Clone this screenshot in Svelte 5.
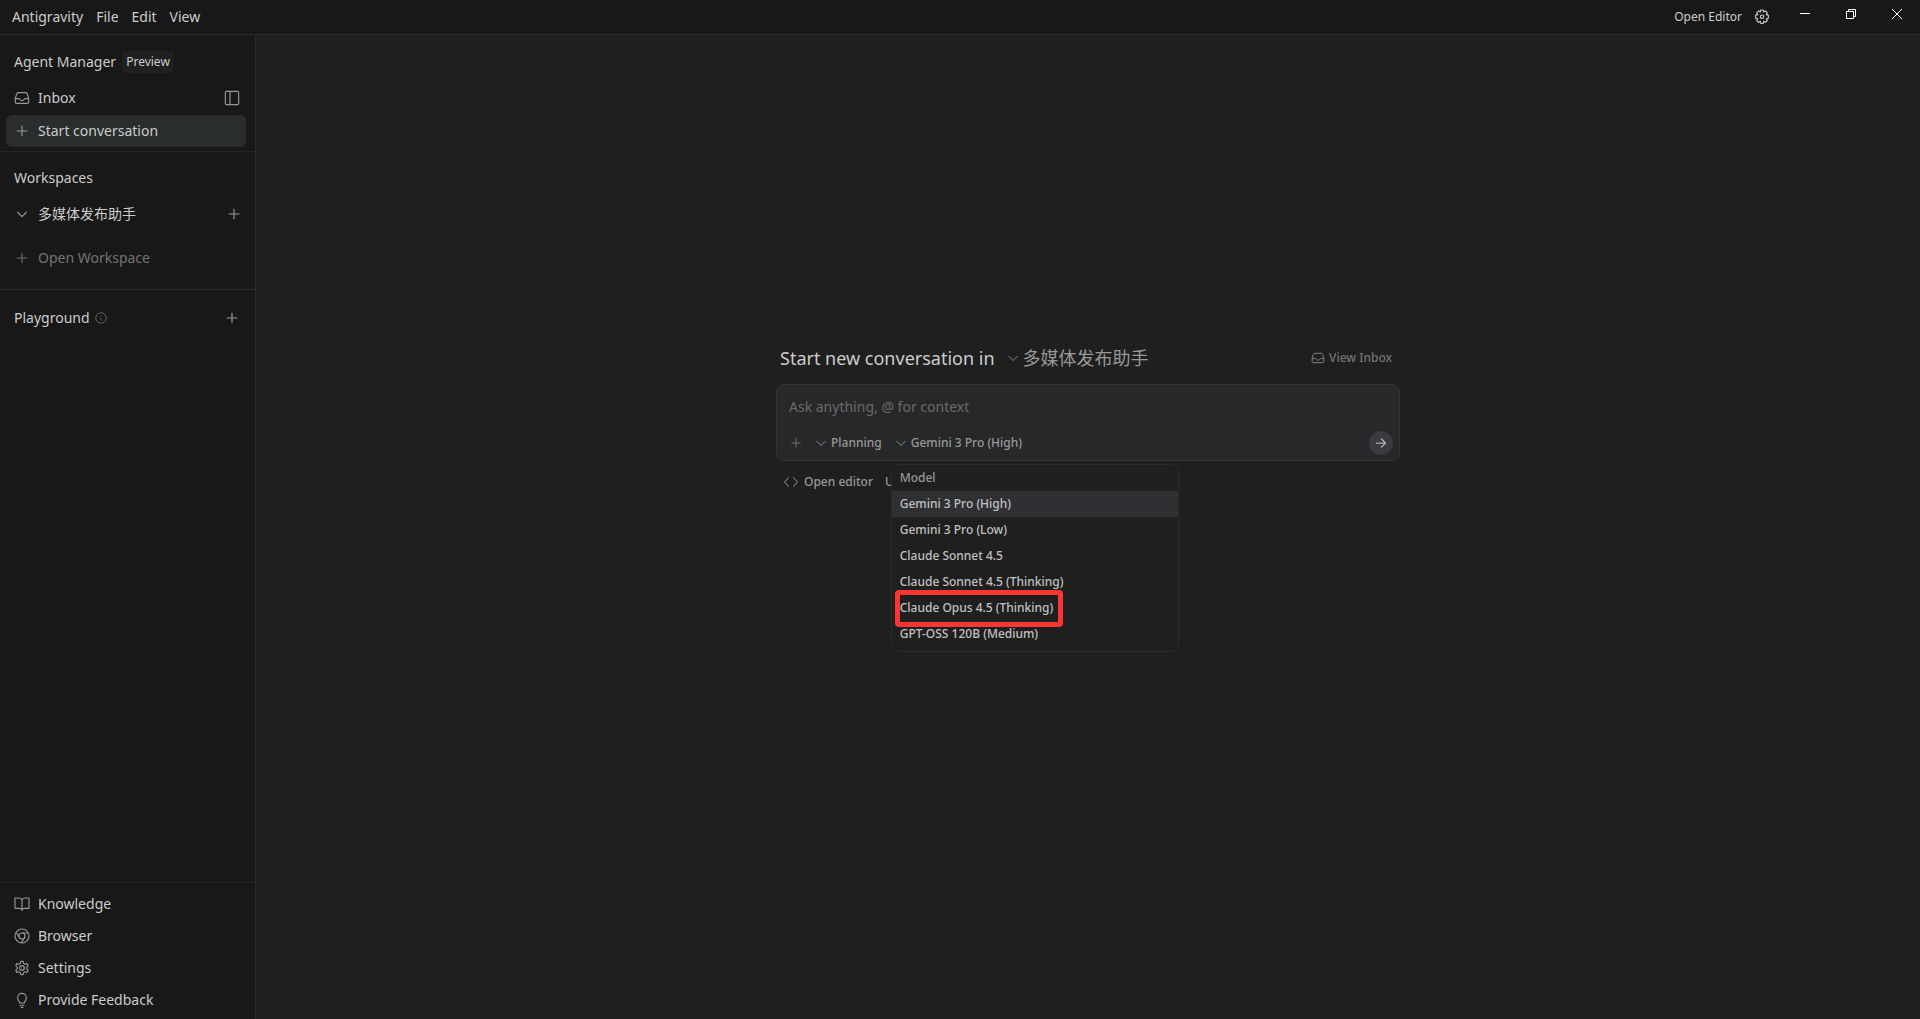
<script>
  const menus = ['File', 'Edit', 'View'];
  const models = [
    'Gemini 3 Pro (High)',
    'Gemini 3 Pro (Low)',
    'Claude Sonnet 4.5',
    'Claude Sonnet 4.5 (Thinking)',
    'Claude Opus 4.5 (Thinking)',
    'GPT-OSS 120B (Medium)'
  ];
  const marked = 'Claude Opus 4.5 (Thinking)';
  const footer = [
    { label: 'Knowledge', icon: 'book' },
    { label: 'Browser', icon: 'chrome' },
    { label: 'Settings', icon: 'gear' },
    { label: 'Provide Feedback', icon: 'bulb' }
  ];
  const workspace = '多媒体发布助手';
  let selected = $state(models[0]);
  let open = $state(true);
  let prompt = $state('');

  function choose(model) {
    selected = model;
    open = false;
  }
</script>

{#snippet icon(name, size = 16)}
  <svg class="icon" width={size} height={size} viewBox="0 0 24 24" aria-hidden="true">
    {#if name === 'inbox'}
      <path d="M22 13h-5.500c-.8 0-1 .5-1.500 1.200C14.300 15.400 13.400 16 12 16s-2.300-.6-3-1.800C8.500 13.500 8.300 13 7.500 13H2" />
      <path d="M6.500 4h11c1 0 1.700.5 2.100 1.400L22 12v6c0 1.200-.8 2-2 2H4c-1.200 0-2-.8-2-2v-6l2.400-6.600C4.800 4.500 5.500 4 6.500 4z" />
    {:else if name === 'panel'}
      <rect x="2" y="2" width="20" height="20" rx="2" />
      <path d="M9 2v20" />
    {:else if name === 'plus'}
      <path d="M12 4v16M4 12h16" />
    {:else if name === 'chevron'}
      <path d="M5 9l7 7 7-7" />
    {:else if name === 'chevron-wide'}
      <path d="M3 8l9 9 9-9" />
    {:else if name === 'info'}
      <circle cx="12" cy="12" r="10.500" />
      <path d="M12 11v6M12 7v2" />
    {:else if name === 'book'}
      <path d="M12 5.500C11 4 9.500 3 7.500 3H1.500v15.500H8c2 0 3.200.8 4 2.200.8-1.400 2-2.200 4-2.200h6.500V3h-6c-2 0-3.500 1-4.500 2.500zM12 5.500v17" />
    {:else if name === 'chrome'}
      <circle cx="12" cy="12" r="10.500" />
      <circle cx="12" cy="12" r="4.500" />
      <path d="M12 7.500h9.300M8.100 14.300L3.200 6.300M15.900 14.300l-5 8" />
    {:else if name === 'gear'}
      <path d="M10.300 2h3.400l.7 3 2.200 1.300 3-.9 1.700 3L19.100 10.600v2.800l2.200 2.200-1.700 3-3-.9-2.200 1.300-.7 3h-3.400l-.7-3-2.200-1.300-3 .9-1.700-3 2.200-2.200v-2.800L2.700 8.400l1.700-3 3 .9L9.600 5z" />
      <circle cx="12" cy="12" r="3.500" />
    {:else if name === 'bulb'}
      <path d="M8.500 16.500c0-2-3-3.500-3-8a6.500 6.500 0 0 1 13 0c0 4.500-3 6-3 8zM8.500 19.800h7M10 23h4" />
    {:else if name === 'cog'}
      <path d="M10.200 1.500h3.600l.7 3 2.700-1.700 2.900 2.900-1.800 2.700 3.200.8v4.600l-3.200.8 1.800 2.700-2.900 2.900-2.700-1.700-.7 3.200h-3.600l-.7-3.200-2.700 1.700-2.900-2.900 1.800-2.700-3.200-.8V9.200l3.200-.8-1.800-2.700 2.900-2.900 2.700 1.700z" />
      <circle cx="12" cy="11.500" r="2.500" />
    {:else if name === 'arrow'}
      <path d="M2 12h19M12 3l9 9-9 9" />
    {:else if name === 'code'}
      <path d="M8 4l-7 8 7 8M16 4l7 8-7 8" />
    {/if}
  </svg>
{/snippet}

<div class="app">
  <header>
    <nav aria-label="Application menu">
      <span>Antigravity</span>
      {#each menus as menu}
        <button>{menu}</button>
      {/each}
    </nav>
    <div class="tools">
      <button class="open-editor">Open Editor</button>
      <button class="cog" aria-label="Settings">{@render icon('cog')}</button>
      <div class="window">
        <button aria-label="Minimize">
          <svg width="10" height="10" viewBox="0 0 10 10"><path d="M0 4.500h10" /></svg>
        </button>
        <button aria-label="Restore">
          <svg width="10" height="10" viewBox="0 0 10 10"><path d="M.5 2.500h7v7h-7zM2.500 2V.5h7v7H8" /></svg>
        </button>
        <button aria-label="Close">
          <svg width="10" height="10" viewBox="0 0 10 10"><path d="M0 0l10 10M10 0L0 10" /></svg>
        </button>
      </div>
    </div>
  </header>

  <div class="body">
    <aside>
      <section class="top">
        <div class="title">Agent Manager <span class="badge">Preview</span></div>
        <div class="row">
          <button class="item">{@render icon('inbox')}Inbox</button>
          <button class="action" aria-label="Toggle sidebar">{@render icon('panel')}</button>
        </div>
        <button class="item start">{@render icon('plus')}Start conversation</button>
      </section>
      <section class="workspaces">
        <h2>Workspaces</h2>
        <div class="row">
          <button class="item">{@render icon('chevron')}{workspace}</button>
          <button class="action" aria-label="New conversation in workspace">{@render icon('plus')}</button>
        </div>
        <button class="item muted">{@render icon('plus')}Open Workspace</button>
      </section>
      <section class="playground">
        <h2>Playground {@render icon('info', 12)}</h2>
        <button class="action" aria-label="New playground">{@render icon('plus')}</button>
      </section>
      <nav class="footer" aria-label="Resources">
        {#each footer as entry}
          <button class="item">{@render icon(entry.icon)}{entry.label}</button>
        {/each}
      </nav>
    </aside>

    <main>
      <div class="column">
        <div class="heading">
          <h1>Start new conversation in</h1>
          <button class="where">{@render icon('chevron-wide', 12)}<span>{workspace}</span></button>
          <button class="view-inbox">{@render icon('inbox', 14)}View Inbox</button>
        </div>
        <form class="composer" onsubmit={(e) => e.preventDefault()}>
          <input type="text" aria-label="Message" placeholder="Ask anything, @ for context" bind:value={prompt} />
          <div class="controls">
            <button type="button" class="add" aria-label="Add context">{@render icon('plus', 14)}</button>
            <button type="button" class="pick">{@render icon('chevron-wide', 12)}Planning</button>
            <div class="model">
              <button type="button" class="pick" aria-expanded={open} onclick={() => (open = !open)}>
                {@render icon('chevron-wide', 12)}{selected}
              </button>
              {#if open}
                <div class="popup">
                  <div class="caption">Model</div>
                  {#each models as model}
                    <button type="button" class:active={model === selected} onclick={() => choose(model)}>
                      <span class:marked={model === marked}>{model}</span>
                    </button>
                  {/each}
                </div>
              {/if}
            </div>
            <button class="send" aria-label="Send">{@render icon('arrow', 12)}</button>
          </div>
        </form>
        <div class="links">
          <button>{@render icon('code', 14)}Open editor</button>
          <button>U</button>
        </div>
      </div>
    </main>
  </div>
</div>

<style>
  :global(body) {
    background: #1f1f1f;
  }
  .app {
    min-height: 100vh;
    display: flex;
    flex-direction: column;
    box-sizing: border-box;
    color: #cccccc;
    font: 14px/20px 'Noto Sans', 'Noto Sans CJK SC', sans-serif;
  }
  .app * {
    box-sizing: border-box;
  }
  button {
    display: flex;
    align-items: center;
    border: 0;
    padding: 0;
    background: none;
    color: inherit;
    font: inherit;
    white-space: nowrap;
  }
  h1,
  h2 {
    margin: 0;
    font: inherit;
  }
  .icon {
    flex: none;
    fill: none;
    stroke: currentColor;
    stroke-width: 1.700;
    stroke-linejoin: round;
    color: #989898;
  }

  header {
    display: flex;
    justify-content: space-between;
    height: 35px;
    background: #181818;
    border-bottom: 1px solid #2b2b2b;
  }
  header nav {
    display: flex;
    align-items: center;
    gap: 13px;
    padding-left: 12px;
  }
  .tools {
    display: flex;
    align-items: center;
  }
  .open-editor {
    font-size: 12px;
  }
  .cog {
    margin-left: 12px;
  }
  .cog .icon {
    color: #cccccc;
  }
  .window {
    display: flex;
    align-self: flex-start;
    margin-left: 12px;
  }
  .window button {
    justify-content: center;
    width: 46px;
    height: 28px;
  }
  .window svg {
    fill: none;
    stroke: #ffffff;
    stroke-width: 1;
  }

  .body {
    flex: 1;
    display: flex;
  }
  aside {
    flex: none;
    display: flex;
    flex-direction: column;
    width: 256px;
    background: #181818;
    border-right: 1px solid #2b2b2b;
  }
  section {
    border-bottom: 1px solid #242424;
  }
  .title {
    display: flex;
    align-items: center;
    gap: 6px;
    height: 22px;
    padding-left: 8px;
  }
  .badge {
    padding: 1px 4px;
    border-radius: 4px;
    background: #1f2020;
    font-size: 12px;
  }
  .top {
    padding: 16px 9px 4px 6px;
  }
  .top .row {
    margin-top: 9px;
  }
  .row {
    display: flex;
    justify-content: space-between;
    align-items: center;
    padding-right: 6px;
  }
  .item {
    gap: 8px;
    height: 32px;
    padding-left: 8px;
  }
  .start {
    width: 100%;
    margin-top: 1px;
    border-radius: 6px;
    background: #292d2e;
  }
  .workspaces {
    padding: 16px 9px 15px 6px;
    border-bottom-color: #2b2b2b;
  }
  h2 {
    display: flex;
    align-items: center;
    gap: 5px;
    padding-left: 8px;
  }
  .workspaces .row {
    margin-top: 10px;
    padding-right: 4px;
  }
  .muted {
    margin-top: 12px;
    color: #747474;
  }
  .muted .icon,
  h2 .icon {
    color: #6e6e6e;
  }
  .playground {
    display: flex;
    justify-content: space-between;
    padding: 18px 15px 16px 6px;
    border: 0;
  }
  .footer {
    display: flex;
    flex-direction: column;
    margin-top: auto;
    padding: 5px 6px 3px;
    border-top: 1px solid #242424;
  }

  main {
    flex: 1;
    display: flex;
    justify-content: center;
    align-items: flex-start;
    padding: 308px 16px 16px;
    background: #1f1f1f;
  }
  .column {
    width: 100%;
    max-width: 624px;
  }
  .heading {
    display: flex;
    align-items: center;
    height: 30px;
    margin-bottom: 11px;
    padding: 0 8px 0 4px;
  }
  h1 {
    font-size: 18px;
  }
  .where {
    gap: 4px;
    margin-left: 12px;
    color: #989898;
    font-size: 18px;
  }
  .view-inbox {
    gap: 4px;
    margin-left: auto;
    color: #747474;
    font-size: 12px;
    font-weight: 500;
  }
  .view-inbox .icon {
    color: #808080;
  }
  .composer {
    padding: 12px 6px 5px 12px;
    border: 1px solid #333436;
    border-radius: 8px;
    background: #272829;
  }
  input {
    display: block;
    width: 100%;
    height: 20px;
    padding: 0;
    border: 0;
    outline: 0;
    background: none;
    color: #cccccc;
    font: inherit;
  }
  input::placeholder {
    color: #6a6a6b;
    opacity: 1;
  }
  .controls {
    display: flex;
    align-items: center;
    margin-top: 14px;
    color: #989898;
    font-size: 12px;
    font-weight: 500;
  }
  .add {
    margin-right: 12px;
  }
  .add .icon {
    color: #6e6e6e;
  }
  .pick {
    gap: 4px;
  }
  .model {
    position: relative;
    margin-left: 13px;
  }
  .popup {
    position: absolute;
    z-index: 1;
    top: 31px;
    left: -4px;
    width: 288px;
    padding-bottom: 4px;
    border: 1px solid #2b2b2b;
    border-radius: 8px;
    background: #1f1f1f;
    color: #c0c0c0;
  }
  .caption,
  .popup button {
    width: 100%;
    height: 26px;
    padding: 0 8px;
    line-height: 26px;
  }
  .caption {
    color: #989898;
  }
  .popup .active {
    background: #2f3034;
  }
  .marked {
    position: relative;
  }
  .marked::after {
    content: '';
    position: absolute;
    inset: -5px -10px -6px -5px;
    border: 5px solid #fb3434;
    border-radius: 4px;
  }
  .send {
    justify-content: center;
    width: 24px;
    height: 24px;
    margin-left: auto;
    border-radius: 50%;
    background: #393b40;
  }
  .send .icon {
    color: #b0b0b0;
    stroke-width: 2.500;
  }
  .links {
    display: flex;
    gap: 12px;
    margin-top: 11px;
    padding-left: 8px;
    color: #989898;
    font-size: 12px;
    font-weight: 500;
  }
  .links button {
    gap: 6px;
  }
</style>
